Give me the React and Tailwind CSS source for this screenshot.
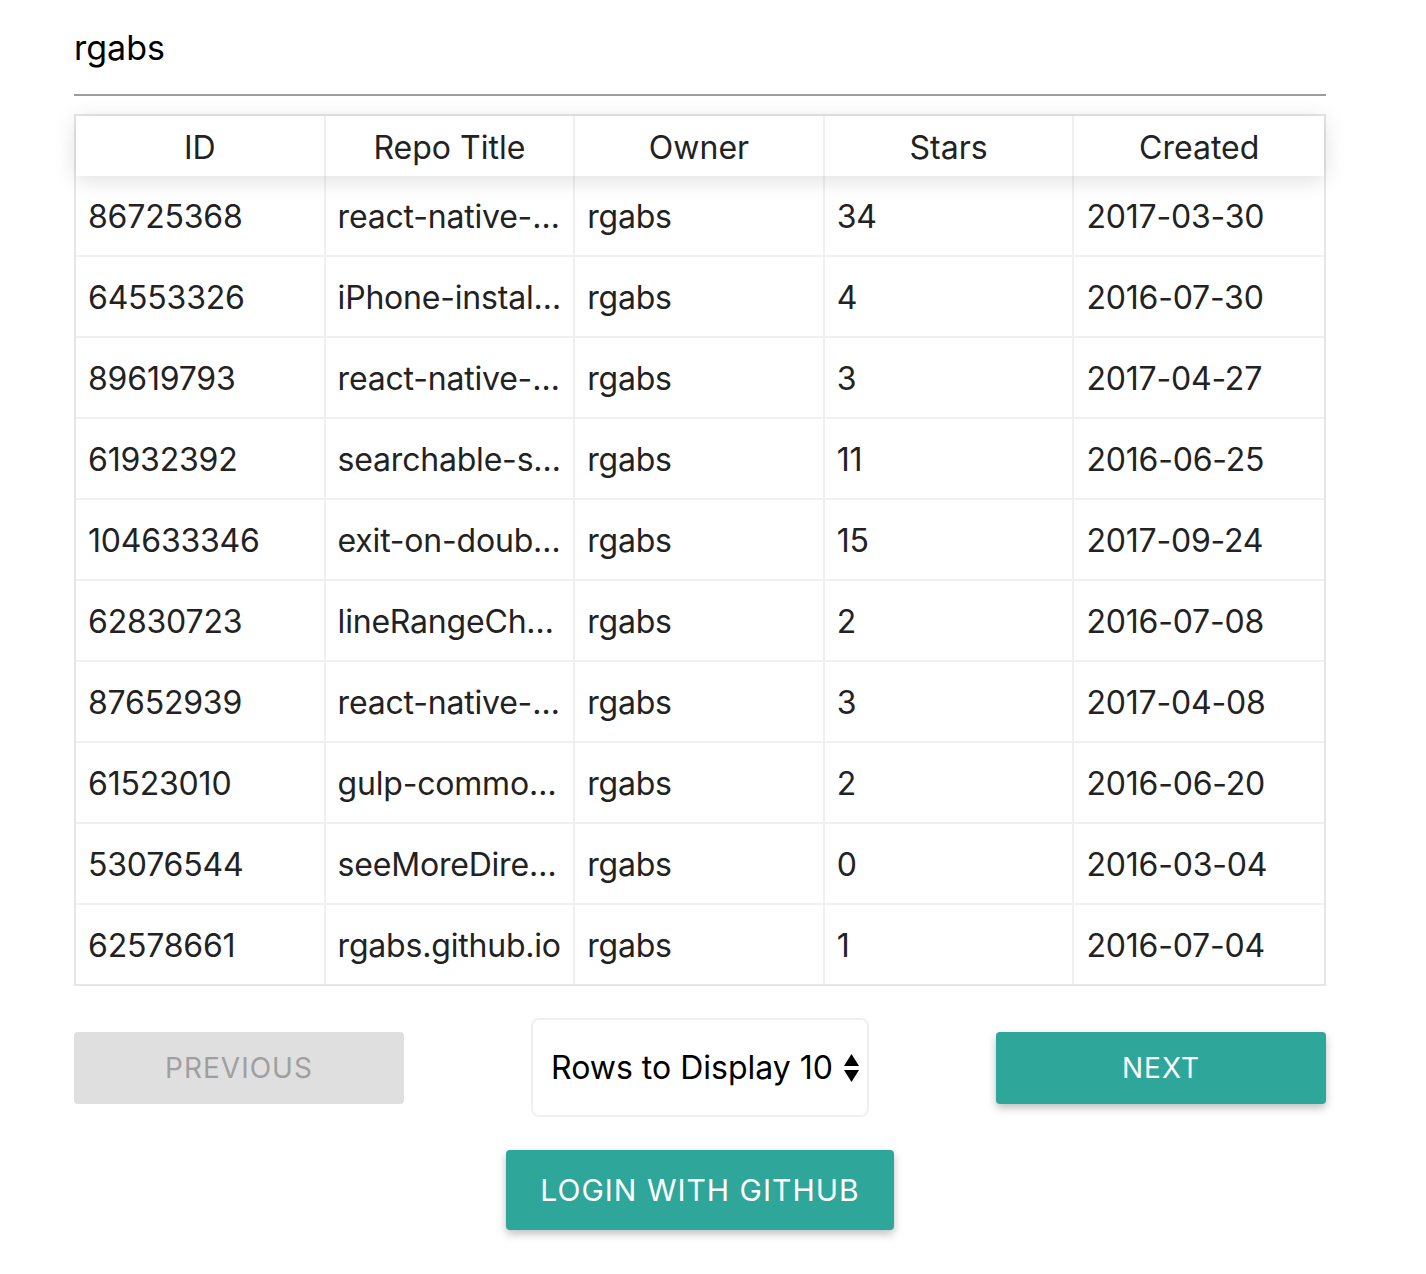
import React from "react";

const rows = [
  ["86725368", "react-native-sticky-header", "rgabs", "34", "2017-03-30"],
  ["64553326", "iPhone-installer", "rgabs", "4", "2016-07-30"],
  ["89619793", "react-native-tab-view", "rgabs", "3", "2017-04-27"],
  ["61932392", "searchable-select", "rgabs", "11", "2016-06-25"],
  ["104633346", "exit-on-double-back", "rgabs", "15", "2017-09-24"],
  ["62830723", "lineRangeChart", "rgabs", "2", "2016-07-08"],
  ["87652939", "react-native-redux", "rgabs", "3", "2017-04-08"],
  ["61523010", "gulp-commonjs", "rgabs", "2", "2016-06-20"],
  ["53076544", "seeMoreDirective", "rgabs", "0", "2016-03-04"],
  ["62578661", "rgabs.github.io", "rgabs", "1", "2016-07-04"],
];

const headers = ["ID", "Repo Title", "Owner", "Stars", "Created"];

export default function App() {
  return (
    <div className="min-h-screen bg-white text-[#222]" style={{ fontFamily: "Inter, 'Noto Sans', sans-serif" }}>
      <div className="ml-[74px] w-[1252px]">
        {/* search input */}
        <div className="flex h-[96px] items-center border-b-2 border-[#9e9e9e] text-[34px] text-black">
          rgabs
        </div>

        {/* table */}
        <div className="mt-[18px] border-2 border-[#e6e6e6]">
          <div className="relative z-10 grid grid-cols-5 bg-white shadow-[0_4px_22px_rgba(0,0,0,0.13)]">
            {headers.map((h, i) => (
              <div
                key={h}
                className={
                  "flex h-[60px] items-center justify-center pt-[3px] text-[32px] " +
                  (i < 4 ? "border-r-2 border-[#f0f0f0]" : "")
                }
              >
                {h}
              </div>
            ))}
          </div>
          {rows.map((r, ri) => (
            <div
              key={r[0]}
              className={"grid grid-cols-5 " + (ri < rows.length - 1 ? "border-b-2 border-[#f0f0f0]" : "")}
            >
              {r.map((c, ci) => (
                <div
                  key={ci}
                  className={
                    "h-[79px] min-w-0 overflow-hidden px-[12px] pt-[1px] text-[32px] leading-[79px] tracking-[-0.2px] text-ellipsis whitespace-nowrap " +
                    (ci < 4 ? "border-r-2 border-[#f0f0f0]" : "")
                  }
                >
                  {c}
                </div>
              ))}
            </div>
          ))}
        </div>

        {/* controls */}
        <div className="mt-[32px] flex items-center justify-between">
          <button className="h-[72px] w-[330px] rounded-[4px] bg-[#dfdfdf] text-[28px] tracking-[1px] text-[#9f9f9f]">
            PREVIOUS
          </button>
          <div className="flex h-[99px] w-[338px] items-center rounded-[8px] border-2 border-[#f0f0f0] pl-[18px] text-[32px] text-black">
            <span>Rows to Display 10</span>
            <svg className="ml-[10px]" width="17" height="30" viewBox="0 0 17 30">
              <path d="M8.5 1 L16 13 L1 13 Z" fill="#000" />
              <path d="M1 17 L16 17 L8.5 29 Z" fill="#000" />
            </svg>
          </div>
          <button className="h-[72px] w-[330px] rounded-[4px] bg-[#2ea69a] text-[28px] tracking-[1px] text-white shadow-[0_4px_8px_rgba(0,0,0,0.25)]">
            NEXT
          </button>
        </div>

        <div className="mt-[33px] flex justify-center">
          <button className="h-[80px] w-[388px] rounded-[4px] bg-[#2ea69a] text-[30px] tracking-[1px] text-white shadow-[0_4px_8px_rgba(0,0,0,0.25)]">
            LOGIN WITH GITHUB
          </button>
        </div>
      </div>
    </div>
  );
}
